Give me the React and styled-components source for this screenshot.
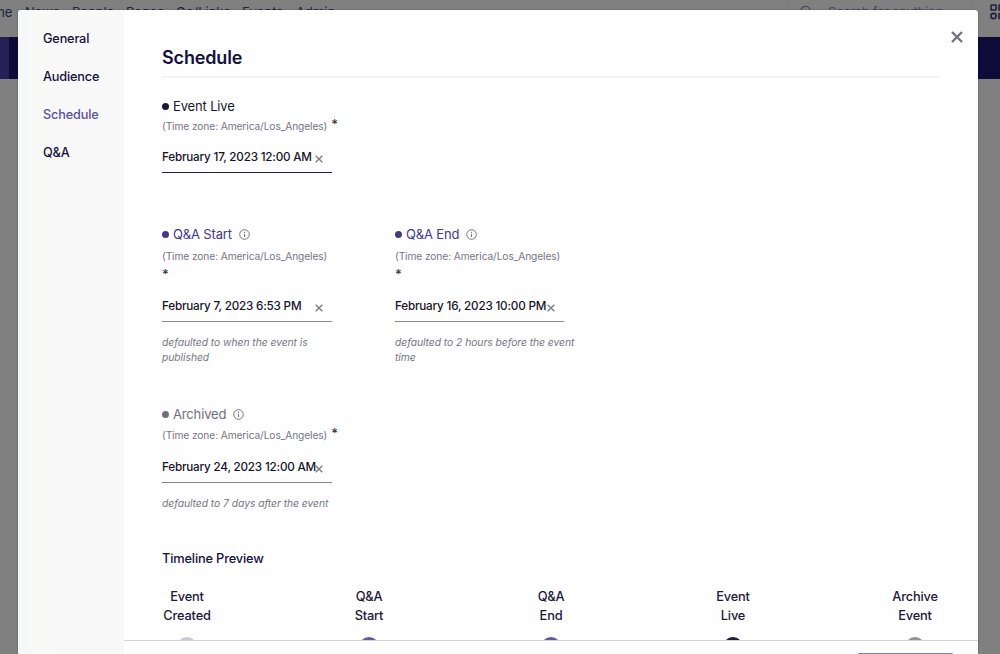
import React from "react";
import styled, { createGlobalStyle } from "styled-components";

const Global = createGlobalStyle`
  *, *::before, *::after { box-sizing: border-box; }
  body { margin: 0; overflow: hidden; font-family: Inter, "Liberation Sans", sans-serif; background: #808080; }
`;

const Page = styled.div`
  position: relative;
  height: 654px;
  overflow: hidden;
  background: #808080;
`;

const TopBar = styled.header`
  display: flex;
  height: 37px;
  color: #23213f;
  font-size: 13px;
  line-height: 24px;
`;

const TopNav = styled.nav`
  display: flex;
  width: 787px;
  margin-left: -24px;
  flex: none;
`;

const TopLink = styled.span`
  width: ${(p) => p.$w}px;
  flex: none;
  white-space: nowrap;
`;

const SearchBox = styled.div`
  display: flex;
  gap: 16px;
  width: 185px;
  margin-left: 24px;
  padding-left: 12px;
  border-left: 1px solid #777;
  border-right: 1px solid #777;
  color: #46445c;
  flex: none;
  letter-spacing: -0.3px;
  white-space: nowrap;
  svg { margin-top: 5px; }
`;

const Apps = styled.svg`
  flex: none;
  margin: 4px 0 0 18px;
`;

const Banner = styled.div`
  height: 42px;
  border-left: 9px solid #252058;
  background: #0f0b38;
`;

const Modal = styled.section`
  position: absolute;
  left: 18px;
  top: 10px;
  width: 960px;
  height: 644px;
  display: flex;
  overflow: hidden;
  border-radius: 3px 3px 0 0;
  background: #fefefe;
  box-shadow: 0 0 2px rgba(0, 0, 0, 0.35);
`;

const Sidebar = styled.nav`
  width: 106px;
  flex: none;
  padding: 10px 0 0 25px;
  background: linear-gradient(90deg, #f6f7f9 0 12px, #f9f9f8 12px 34px, #f8f8f9 34px);
`;

const SideItem = styled.div`
  height: 38px;
  line-height: 38px;
  font-size: 12.7px;
  font-weight: 500;
  letter-spacing: -0.15px;
  color: ${(p) => (p.$active ? "#5a4f9d" : "#15103c")};
`;

const Main = styled.main`
  position: relative;
  flex: 1;
  display: flex;
  flex-direction: column;
`;

const Close = styled.button`
  position: absolute;
  right: 15px;
  top: 21px;
  width: 12px;
  height: 12px;
  padding: 0;
  border: 0;
  background: none;
  svg { display: block; }
`;

const Body = styled.div`
  height: 630px;
  padding: 36px 38px 0;
  overflow: hidden;
  flex: none;
`;

const Title = styled.h2`
  height: 32px;
  margin: 0 0 18px;
  border-bottom: 2px solid #f4f4f5;
  font-size: 18px;
  font-weight: 600;
  line-height: 24px;
  letter-spacing: -0.15px;
  color: #140f3d;
`;

const FieldRow = styled.div`
  display: flex;
  gap: 47px;
  height: ${(p) => p.$h}px;
`;

const Field = styled.div`
  width: ${(p) => (p.$wide ? 200 : 186)}px;
  flex: none;
`;

const Label = styled.div`
  display: flex;
  align-items: center;
  height: 20px;
  font-size: 13px;
  line-height: 20px;
  color: ${(p) => p.$color};
  letter-spacing: -0.15px;
  svg { margin-left: 7px; }
`;

const Dot = styled.span`
  width: 7px;
  height: 7px;
  margin-right: 4px;
  border-radius: 50%;
  background: ${(p) => p.$color};
`;

const Zone = styled.div`
  display: flex;
  flex-direction: ${(p) => (p.$stack ? "column" : "row")};
  gap: ${(p) => (p.$stack ? 0 : 4)}px;
  height: ${(p) => p.$h}px;
  padding-top: ${(p) => p.$pt}px;
  font-size: 10.2px;
  line-height: 20px;
  letter-spacing: -0.09px;
  color: #777583;
`;

const Star = styled.span`
  height: ${(p) => (p.$stack ? 16 : 18)}px;
  font-size: 13px;
  font-weight: 500;
  line-height: 17px;
  color: #353344;
`;

const DateInput = styled.div`
  display: flex;
  width: ${(p) => p.$w}px;
  height: 28px;
  margin-top: ${(p) => p.$mt}px;
  border-bottom: 1px solid ${(p) => p.$line};
  font-size: 11.7px;
  font-weight: 500;
  line-height: 25px;
  white-space: nowrap;
  color: #15132a;
  letter-spacing: -0.2px;
  svg { flex: none; margin-top: 10px; }
`;

const DateValue = styled.span`
  width: calc(100% - 17px);
  flex: none;
`;

const Hint = styled.p`
  margin: 13px 0 0;
  white-space: pre-line;
  font-size: 10.3px;
  font-style: italic;
  line-height: 15px;
  letter-spacing: -0.04px;
  color: #777583;
`;

const TimelineTitle = styled.h3`
  margin: 0;
  height: 38px;
  font-size: 12.8px;
  font-weight: 500;
  line-height: 20px;
  letter-spacing: -0.16px;
  color: #15103c;
`;

const Timeline = styled.div`
  display: flex;
  justify-content: space-between;
`;

const Step = styled.div`
  width: 50px;
  display: flex;
  flex-direction: column;
  align-items: center;
  text-align: center;
  white-space: pre-line;
  font-size: 12.8px;
  font-weight: 500;
  line-height: 19px;
  letter-spacing: -0.18px;
  color: #1c1838;
`;

const StepDot = styled.span`
  width: 20px;
  height: 20px;
  margin-top: 12px;
  border-radius: 50%;
  background: ${(p) => p.$color};
`;

const Footer = styled.footer`
  display: flex;
  flex: 1;
  justify-content: flex-end;
  padding: 12px 24px 0 0;
  border-top: 1px solid #d3d3d7;
  background: #fefefe;
`;

const SaveButton = styled.button`
  width: 97px;
  height: 32px;
  border: 0;
  border-radius: 3px;
  background: #827ca8;
`;

const Info = () => (
  <svg width="11" height="11" viewBox="0 0 11 11" fill="none" stroke="#777480">
    <circle cx="5.5" cy="5.5" r="4.8" strokeWidth="1" />
    <path d="M5.5 5v3M5.5 2.8v1.1" strokeWidth="1.1" />
  </svg>
);

const Cross = ({ size, weight, color }) => (
  <svg width={size} height={size} viewBox="0 0 12 12" stroke={color} strokeWidth={weight} fill="none">
    <path d="M1 1l10 10M11 1L1 11" />
  </svg>
);

function DateField({ label, color, info, stack, value, line, hint, width = 170 }) {
  const inlineInfo = info && !stack;
  return (
    <Field $wide={!stack}>
      <Label $color={color}>
        <Dot $color={color} />
        {label}
        {info && <Info />}
      </Label>
      <Zone $stack={stack} $h={stack ? 40 : inlineInfo ? 21 : 20} $pt={stack ? 2 : inlineInfo ? 1 : 0}>
        <span>(Time zone: America/Los_Angeles)</span>
        <Star $stack={stack}>*</Star>
      </Zone>
      <DateInput $line={line} $w={width} $mt={stack || inlineInfo ? 10 : 9}>
        <DateValue>{value}</DateValue>
        <Cross size={8} weight={2.1} color="#7c7b87" />
      </DateInput>
      {hint && <Hint>{hint}</Hint>}
    </Field>
  );
}

const links = [["Home", 49], ["News", 47], ["People", 54], ["Pages", 50], ["Go/Links", 66], ["Events", 54], ["Admin", 50]];
const steps = [
  ["Event\nCreated", "#cbc9d3"],
  ["Q&A\nStart", "#62589c"],
  ["Q&A\nEnd", "#62589c"],
  ["Event\nLive", "#201d35"],
  ["Archive\nEvent", "#929199"],
];

export default function App() {
  return (
    <Page>
      <Global />
      <TopBar>
        <TopNav>
          {links.map(([text, w]) => <TopLink key={text} $w={w}>{text}</TopLink>)}
        </TopNav>
        <SearchBox>
          <svg width="12" height="14" viewBox="0 0 12 14" fill="none" stroke="#46445c" strokeWidth="1.2">
            <circle cx="5.5" cy="6" r="4.6" /><path d="M9 9.5l3 3" />
          </svg>
          <span>Search for anything</span>
        </SearchBox>
        <Apps width="16" height="16" viewBox="0 0 16 16" fill="none" stroke="#24213f" strokeWidth="1.6">
          <rect x="1" y="1" width="5" height="5" rx="0.5" />
          <rect x="9" y="1" width="5" height="5" rx="0.5" />
          <circle cx="3.5" cy="12" r="2.6" />
          <rect x="9" y="9.5" width="5" height="5" rx="0.5" />
        </Apps>
      </TopBar>
      <Banner />
      <Modal>
        <Sidebar>
          <SideItem>General</SideItem>
          <SideItem>Audience</SideItem>
          <SideItem $active>Schedule</SideItem>
          <SideItem>Q&amp;A</SideItem>
        </Sidebar>
        <Main>
          <Close aria-label="Close"><Cross size={12} weight={2.4} color="#74737b" /></Close>
          <Body>
            <Title>Schedule</Title>
            <FieldRow $h={128}>
              <DateField label="Event Live" color="#1b1930" value="February 17, 2023 12:00 AM" line="#252336" />
            </FieldRow>
            <FieldRow $h={180}>
              <DateField stack info label="Q&A Start" color="#443888" value="February 7, 2023 6:53 PM" line="#8b89a5" hint={"defaulted to when the event is\npublished"} />
              <DateField stack info label="Q&A End" color="#443888" value="February 16, 2023 10:00 PM" line="#8b89a5" width={169} hint={"defaulted to 2 hours before the event\ntime"} />
            </FieldRow>
            <FieldRow $h={145}>
              <DateField info label="Archived" color="#716f7b" value="February 24, 2023 12:00 AM" line="#85838f" hint="defaulted to 7 days after the event" />
            </FieldRow>
            <TimelineTitle>Timeline Preview</TimelineTitle>
            <Timeline>
              {steps.map(([text, color]) => (
                <Step key={text}>{text}<StepDot $color={color} /></Step>
              ))}
            </Timeline>
          </Body>
          <Footer><SaveButton aria-label="Save" /></Footer>
        </Main>
      </Modal>
    </Page>
  );
}
